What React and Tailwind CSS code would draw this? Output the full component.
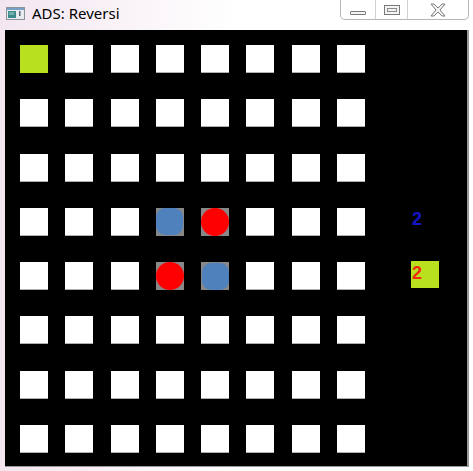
import React from "react";

const ROWS = 8;
const COLS = 8;

function cell(r, c) {
  if (r === 0 && c === 0) return "green";
  if (r === 3 && c === 3) return "blue";
  if (r === 3 && c === 4) return "red";
  if (r === 4 && c === 3) return "red";
  if (r === 4 && c === 4) return "blue";
  return "white";
}

function Cell({ kind }) {
  if (kind === "green") return <div className="w-[28px] h-[28px] bg-[#b8e01e]" />;
  if (kind === "white") return <div className="w-[28px] h-[28px] bg-white border-b border-[#b0b0b0]" />;
  return (
    <div className="w-[28px] h-[28px] bg-[#888888] flex items-center justify-center">
      <div
        className={
          kind === "red"
            ? "w-[28px] h-[28px] rounded-full bg-[#ff0000]"
            : "w-[27px] h-[27px] rounded-[9px] bg-[#4f81bd]"
        }
      />
    </div>
  );
}

function AppIcon() {
  return (
    <svg width="19" height="13" viewBox="0 0 19 13">
      <rect x="0.5" y="0.5" width="18" height="12" fill="#e8ecef" stroke="#8a949c" />
      <rect x="1" y="1" width="17" height="2" fill="#7aa0c8" />
      <rect x="2" y="4" width="8" height="7" fill="#3d8a8c" />
      <rect x="3" y="5" width="5" height="3" fill="#6fb0a8" />
      <rect x="13" y="4" width="1.5" height="5" fill="#5a6a78" />
    </svg>
  );
}

export default function App() {
  const cells = [];
  for (let r = 0; r < ROWS; r++) {
    for (let c = 0; c < COLS; c++) {
      cells.push(<Cell key={`${r}-${c}`} kind={cell(r, c)} />);
    }
  }
  return (
    <div
      className="w-[473px] h-[471px] bg-gradient-to-r from-[#f3e6f0] via-white to-white flex flex-col overflow-hidden"
      style={{ fontFamily: '"Noto Sans", "Open Sans", sans-serif' }}
    >
      <div className="h-[30px] flex items-start">
        <div className="pl-[6px] pt-[7px]">
          <AppIcon />
        </div>
        <div className="pl-[7px] pt-[4px] text-[15px] leading-[19px] text-black">ADS: Reversi</div>
        <div className="flex-1" />
        <div className="flex h-[20px] mr-[4px] border border-t-0 border-[#b6b6b6] rounded-b-[5px] bg-white">
          <div className="w-[35px] flex items-center justify-center border-r border-[#d0d0d0]">
            <div className="w-[16px] h-[4px] mt-[6px] border border-[#7a7a7a] bg-[#f4f4f4] rounded-[1px]" />
          </div>
          <div className="w-[32px] flex items-center justify-center border-r border-[#d0d0d0]">
            <div className="w-[16px] h-[10px] border border-[#7a7a7a] bg-[#f4f4f4] flex items-center justify-center">
              <div className="w-[10px] h-[4px] border border-[#8a8a8a]" />
            </div>
          </div>
          <div className="w-[60px] flex items-center justify-center">
            <svg width="16" height="14" viewBox="0 0 16 14">
              <path
                d="M1 1 L4 1 L8 5 L12 1 L15 1 L10 7 L15 13 L12 13 L8 9 L4 13 L1 13 L6 7 Z"
                fill="#f4f4f4"
                stroke="#7a7a7a"
                strokeWidth="1"
                strokeLinejoin="round"
              />
            </svg>
          </div>
        </div>
      </div>
      <div className="ml-[5px] w-[464px] h-[437px] bg-black border-r-2 border-b border-[#9a9a9a] flex">
        <div
          className="pl-[15px] pt-[15px] grid grid-cols-[repeat(8,28px)] grid-rows-[repeat(8,28px)] gap-x-[17.3px] gap-y-[26.3px] content-start"
        >
          {cells}
        </div>
        <div className="ml-[46px] pt-[177px] flex flex-col" style={{ fontFamily: '"Liberation Sans", Arial, sans-serif' }}>
          <div className="h-[28px] text-[18px] leading-[24px] font-bold text-[#1414c8] pl-[1px]">2</div>
          <div className="mt-[26px] w-[28px] h-[27px] bg-[#b8e01e] text-[18px] leading-[24px] font-bold text-[#ee2a10] pl-[1px]">
            2
          </div>
        </div>
      </div>
    </div>
  );
}
